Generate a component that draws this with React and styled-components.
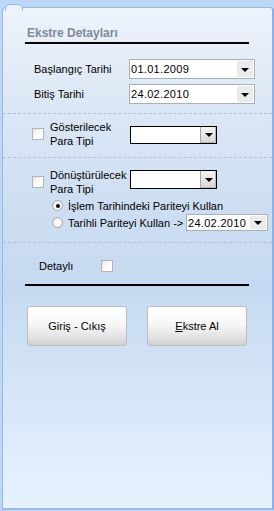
import React from 'react'
import styled, { createGlobalStyle } from 'styled-components'

const Global = createGlobalStyle`
html, body {
margin:0;
padding:0;
}
body {
font-family:"Liberation Sans", Arial, sans-serif;
font-size:11px;
color:#000;
background:#bcd7f8;
}
`

const Window = styled.div`
width:274px;
height:511px;
box-sizing:border-box;
padding:7px 0 1px 2px;
background:#bcd7f8;
`

const Panel = styled.div`
position:relative;
height:100%;
box-sizing:border-box;
border:1px solid #98b9e4;
border-right:2px solid #8db1e6;
border-bottom:2px solid #98bbea;
border-radius:4px 4px 0 0;
background:linear-gradient(to bottom, #eef3fb 0%, #dde8f5 18%, #cddef2 40%, #c6d9f0 56%, #d2e3f6 72%, #e7f2fe 100%);

&::before {
content:"";
position:absolute;
top:-4px;
left:2px;
width:16px;
height:6px;
border-top:1px solid #98b9e4;
border-left:1px solid #98b9e4;
border-right:1px solid #98b9e4;
border-radius:5px 5px 0 0;
background:#eef3fb;
}
`

const Header = styled.div`
margin:18px 23px 0 22px;
height:16px;
border-bottom:2px solid #000;
font-size:12px;
font-weight:bold;
line-height:14px;
color:#808b97;
padding-left:2px;
`

const Section = styled.div`
padding:${p => p.pad};
border-bottom:${p => (p.dashed ? '1px dashed #b9c3cf' : 'none')};
`

const Grid = styled.div`
display:grid;
grid-template-columns:${p => p.cols};
align-items:${p => p.align || 'center'};
row-gap:${p => p.rowGap || '0px'};
`

const Label = styled.div`
line-height:14px;
white-space:nowrap;
`

const Combo = styled.div`
display:flex;
align-items:stretch;
box-sizing:border-box;
width:${p => p.w}px;
height:${p => p.h}px;
margin-top:${p => p.mt || 0}px;
background:#fff;
border:1px solid ${p => (p.dark ? '#000' : '#a9b0b8')};
`

const ComboText = styled.div`
flex:1;
padding-left:1px;
display:flex;
align-items:center;
font-size:11px;
letter-spacing:0.3px;
`

const ArrowBtn = styled.div`
width:${p => p.w || 16}px;
margin:${p => (p.dark ? '0' : '1px')};
display:flex;
align-items:center;
justify-content:center;
background:${p => (p.dark
    ? 'linear-gradient(to bottom, #f4f4f4, #d6d6d6)'
    : '#ebebeb')};
border-left:${p => (p.dark ? '1px solid #a5a5a5' : 'none')};
box-shadow:${p => (p.dark ? 'inset -1px -1px 0 #b8b8b8' : 'none')};
`

const Tri = styled.div`
width:0;
height:0;
border-left:4px solid transparent;
border-right:4px solid transparent;
border-top:4px solid #000;
margin-top:1px;
`

const Check = styled.div`
box-sizing:border-box;
width:12px;
height:12px;
margin-top:${p => p.mt || 0}px;
border:1px solid #b4b4b4;
background:linear-gradient(135deg, #e6e6e6 0%, #fff 60%);
`

const Radio = styled.div`
box-sizing:border-box;
width:11px;
height:11px;
border-radius:50%;
border:1px solid #a4a4a4;
background:radial-gradient(circle at 60% 60%, #fff 0%, #f2f2f2 60%, #dcdcdc 100%);
display:flex;
align-items:center;
justify-content:center;

&::after {
content:"";
display:${p => (p.checked ? 'block' : 'none')};
width:4px;
height:4px;
border-radius:50%;
background:#000;
}
`

const RadioGroup = styled.div`
padding-left:20px;
margin-top:1px;
width:216px;
`

const RadioRow = styled.div`
display:flex;
align-items:center;
height:17px;
`

const RadioText = styled.span`
margin-left:5px;
flex:1;
white-space:nowrap;
`

const DarkLine = styled.div`
margin:0 23px 0 22px;
height:2px;
background:#000;
`

const Buttons = styled.div`
display:flex;
gap:20px;
padding:20px 0 0 24px;
`

const Button = styled.div`
box-sizing:border-box;
width:100px;
height:40px;
display:flex;
align-items:center;
justify-content:center;
border:1px solid #b9bcc1;
border-radius:3px;
background:linear-gradient(to bottom, #ffffff 0%, #f7f7f7 45%, #e2e2e2 80%, #d0d0d0 100%);
font-size:11px;
color:#000;
`

const ComboBox = ({ value, w, h, dark, mt }) => (
    <Combo w={w} h={h} dark={dark} mt={mt}>
        <ComboText>{value}</ComboText>
        <ArrowBtn dark={dark} w={dark ? 15 : 16}>
            <Tri />
        </ArrowBtn>
    </Combo>
)

const App = () => {
    return (
        <Window>
            <Global />
            <Panel>
                <Header>Ekstre Detayları</Header>

                <Section dashed pad="15px 0 9px 31px">
                    <Grid cols="95px 126px" rowGap="5px">
                        <Label>Başlangıç Tarihi</Label>
                        <ComboBox value="01.01.2009" w={126} h={20} />
                        <Label>Bitiş Tarihi</Label>
                        <ComboBox value="24.02.2010" w={126} h={20} />
                    </Grid>
                </Section>

                <Section dashed pad="6px 0 9px 29px">
                    <Grid cols="18px 80px 87px">
                        <Check />
                        <Label>Gösterilecek<br />Para Tipi</Label>
                        <ComboBox w={87} h={18} dark mt={1} />
                    </Grid>
                </Section>

                <Section dashed pad="10px 0 11px 29px">
                    <Grid cols="18px 80px 87px" align="start">
                        <Check mt={8} />
                        <Label>Dönüştürülecek<br />Para Tipi</Label>
                        <ComboBox w={87} h={19} dark mt={2} />
                    </Grid>
                    <RadioGroup>
                        <RadioRow>
                            <Radio checked />
                            <RadioText>İşlem Tarihindeki Pariteyi Kullan</RadioText>
                        </RadioRow>
                        <RadioRow>
                            <Radio />
                            <RadioText>Tarihli Pariteyi Kullan -&gt;</RadioText>
                            <ComboBox value="24.02.2010" w={82} h={17} />
                        </RadioRow>
                    </RadioGroup>
                </Section>

                <Section pad="16px 0 11px 36px">
                    <Grid cols="62px 12px">
                        <Label>Detaylı</Label>
                        <Check />
                    </Grid>
                </Section>
                <DarkLine />

                <Buttons>
                    <Button>Giriş - Cıkış</Button>
                    <Button><u>E</u>kstre Al</Button>
                </Buttons>
            </Panel>
        </Window>
    )
}

export default App
